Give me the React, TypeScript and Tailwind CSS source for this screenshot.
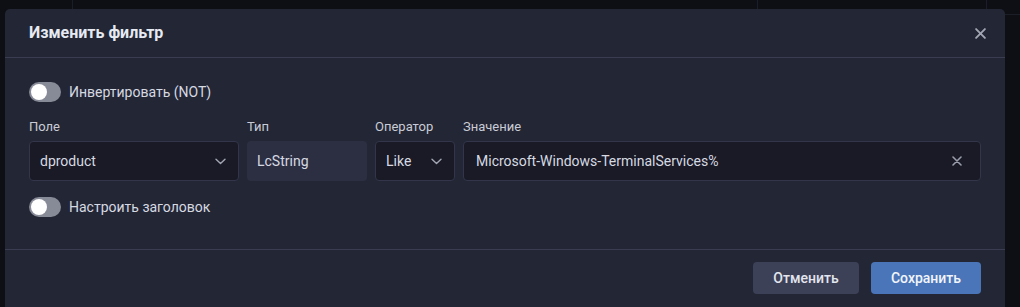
import React from "react";

function Toggle() {
  return (
    <div className="w-8 h-5 rounded-full bg-[#878a97] p-[2px] flex items-center shrink-0">
      <div className="w-4 h-4 rounded-full bg-white" />
    </div>
  );
}

function Chevron() {
  return (
    <svg width="11" height="7" viewBox="0 0 11 7" fill="none" className="shrink-0">
      <path d="M1 1.2 L5.5 5.6 L10 1.2" stroke="#a3a6b4" strokeWidth="1.4" strokeLinecap="round" strokeLinejoin="round" />
    </svg>
  );
}

function XIcon({ size, color, sw }: { size: number; color: string; sw: number }) {
  return (
    <svg width={size} height={size} viewBox="0 0 10 10" fill="none" className="shrink-0">
      <path d="M1 1 L9 9 M9 1 L1 9" stroke={color} strokeWidth={sw} strokeLinecap="round" />
    </svg>
  );
}

export default function App() {
  return (
    <div
      className="relative w-[1020px] h-[307px] overflow-hidden bg-[#0e0f15]"
      style={{ fontFamily: "Roboto, 'Noto Sans', sans-serif" }}
    >
      {/* underlying page lines */}
      <div className="absolute left-[72px] top-0 h-[9px] w-px bg-[#1c1e27]" />
      <div className="absolute left-[757px] top-0 h-[9px] w-px bg-[#1c1e27]" />
      <div className="absolute left-[986px] top-0 h-[14px] w-px bg-[#1c1e27]" />
      <div className="absolute left-[986px] top-[14px] h-px w-[40px] bg-[#1c1e27]" />

      {/* dialog */}
      <div className="absolute left-[5px] top-[9px] w-[1000px] h-[310px] rounded-[5px] bg-[#232634] flex flex-col">
        <div className="h-[49px] border-b border-[#3a3c52] flex items-center justify-between pl-6 pr-[19px]">
          <div className="text-[16px] font-bold text-[#e6eaf3] leading-none">Изменить фильтр</div>
          <XIcon size={11} color="#a2a5b3" sw={1.7} />
        </div>

        <div className="px-6 pt-6 pb-8 flex flex-col">
          <div className="flex items-center gap-2 h-5">
            <Toggle />
            <span className="text-[14px] text-[#d6d9e2]">Инвертировать (NOT)</span>
          </div>

          <div className="flex gap-2 mt-4">
            <div className="flex flex-col w-[210px]">
              <div className="text-[13px] leading-[18px] mb-[5px] text-[#c9ccd6]">Поле</div>
              <div className="h-10 rounded-[4px] border border-[#33364a] bg-[#191a25] flex items-center justify-between pl-[10px] pr-[12px]">
                <span className="text-[14px] text-[#d6d9e2]">dproduct</span>
                <Chevron />
              </div>
            </div>
            <div className="flex flex-col w-[120px]">
              <div className="text-[13px] leading-[18px] mb-[5px] text-[#c9ccd6]">Тип</div>
              <div className="h-10 rounded-[4px] bg-[#2c2f41] flex items-center px-[10px]">
                <span className="text-[14px] text-[#d6d9e2]">LcString</span>
              </div>
            </div>
            <div className="flex flex-col w-[80px]">
              <div className="text-[13px] leading-[18px] mb-[5px] text-[#c9ccd6]">Оператор</div>
              <div className="h-10 rounded-[4px] border border-[#33364a] bg-[#191a25] flex items-center justify-between pl-[10px] pr-[12px]">
                <span className="text-[14px] text-[#d6d9e2]">Like</span>
                <Chevron />
              </div>
            </div>
            <div className="flex flex-col flex-1">
              <div className="text-[13px] leading-[18px] mb-[5px] text-[#c9ccd6]">Значение</div>
              <div className="h-10 rounded-[4px] border border-[#33364a] bg-[#191a25] flex items-center justify-between pl-3 pr-[18px]">
                <span className="text-[14px] text-[#d6d9e2]">Microsoft-Windows-TerminalServices%</span>
                <XIcon size={10} color="#9a9dab" sw={1.6} />
              </div>
            </div>
          </div>

          <div className="flex items-center gap-2 h-5 mt-4">
            <Toggle />
            <span className="text-[14px] text-[#d6d9e2]">Настроить заголовок</span>
          </div>
        </div>

        <div className="border-t border-[#3a3c52] flex justify-end gap-3 px-6 pt-3">
          <button className="h-8 w-[106px] rounded-[4px] bg-[#3d4158] text-[14px] font-medium text-[#e3e6ee]">
            Отменить
          </button>
          <button className="h-8 w-[110px] rounded-[4px] bg-[#4a76b9] text-[14px] font-medium text-[#f2f5fb]">
            Сохранить
          </button>
        </div>
      </div>
    </div>
  );
}
